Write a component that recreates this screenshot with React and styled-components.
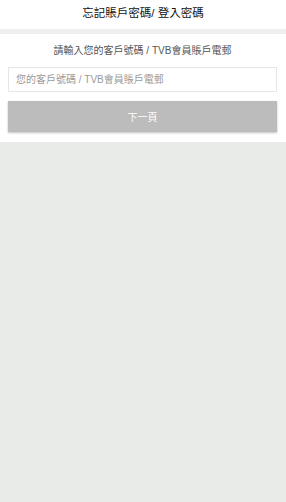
import React, { useState } from 'react'
import styled, { createGlobalStyle } from 'styled-components'

const GlobalStyle = createGlobalStyle`
    html, body {
        margin: 0;
        padding: 0;
        background: #e9ebe8;
        font-family: "Liberation Sans", Arial, "Noto Sans CJK TC", sans-serif;
    }
`

const Page = styled.div`
    min-height: 502px;
    background: #e9ebe8;
`

const Header = styled.div`
    height: 34px;
    box-sizing: border-box;
    background: #fff;
    display: flex;
    justify-content: center;
    align-items: center;
    font-size: 11.5px;
    color: #111;
    padding-bottom: 6px;
    border-bottom: 5px solid #eeeeee;
`

const Panel = styled.div`
    background: #fff;
    padding: 9px 9px 10px 8px;
    display: flex;
    flex-direction: column;
`

const Hint = styled.div`
    text-align: center;
    font-size: 10px;
    color: #555;
    line-height: 16px;
    margin-bottom: 8px;
`

const Input = styled.input`
    height: 25px;
    box-sizing: border-box;
    border: 1px solid #e6e6e6;
    padding: 0 7px;
    font-size: 10px;
    color: #333;
    font-family: inherit;
    outline: none;
    &::placeholder {
        color: #9a9a9a;
    }
`

const Button = styled.button`
    margin-top: 9px;
    height: 31px;
    border: none;
    background: #bbbcbb;
    color: #fff;
    font-size: 10px;
    font-family: inherit;
    box-shadow: 0 1px 2px rgba(0, 0, 0, 0.25);
    cursor: pointer;
`

export default function App() {
    const [value, setValue] = useState('')

    return (
        <Page>
            <GlobalStyle />
            <Header>忘記賬戶密碼/ 登入密碼</Header>
            <Panel>
                <Hint>請輸入您的客戶號碼 / TVB會員賬戶電郵</Hint>
                <Input
                    value={value}
                    onChange={e => setValue(e.target.value)}
                    placeholder="您的客戶號碼 / TVB會員賬戶電郵"
                />
                <Button>下一頁</Button>
            </Panel>
        </Page>
    )
}
